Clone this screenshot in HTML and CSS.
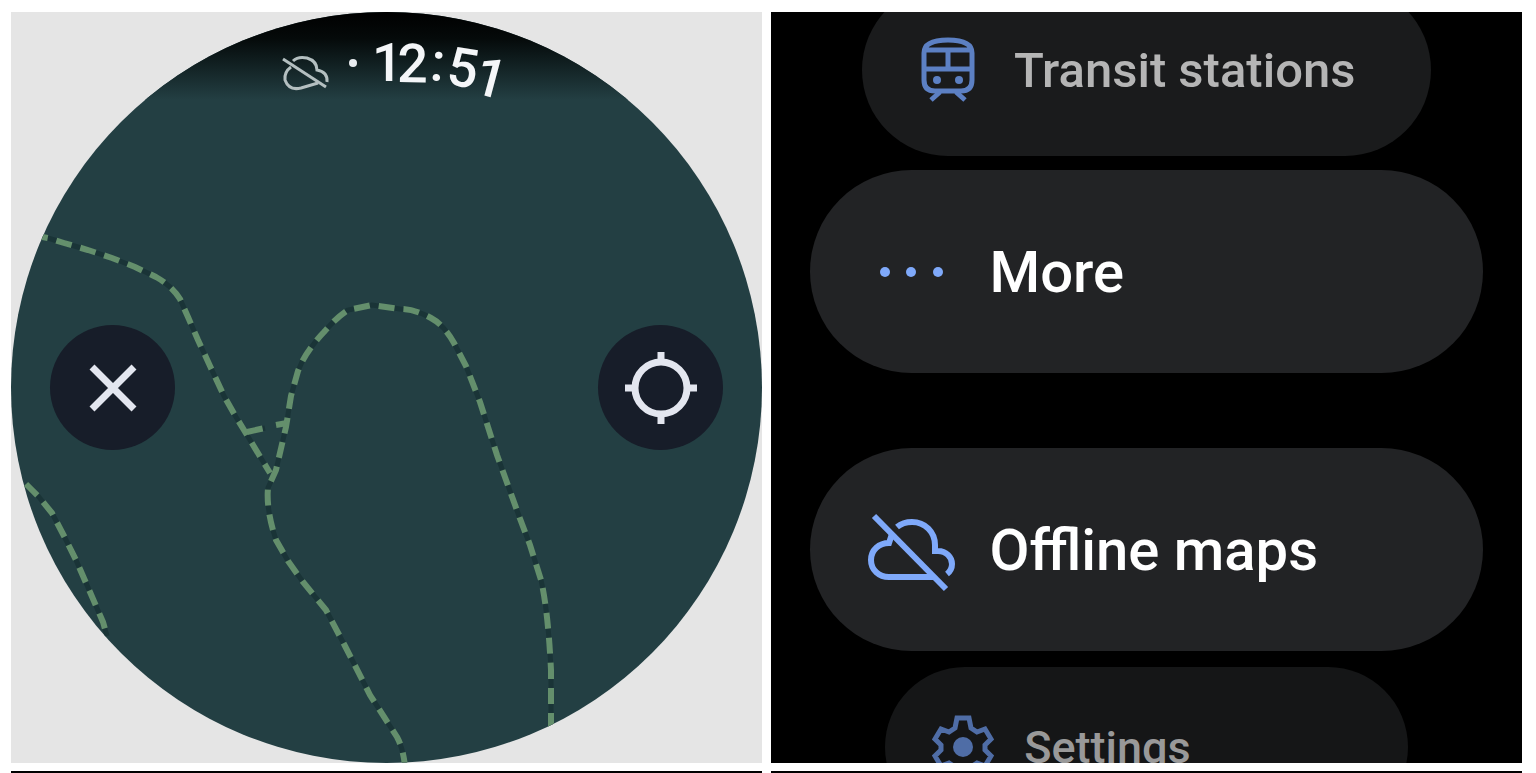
FILE: index.html
```html
<!DOCTYPE html>
<html lang="en">
<head>
    <meta charset="UTF-8">
    <meta name="viewport" content="width=device-width, initial-scale=1.0">
    <title>Offline maps</title>
    <link rel="stylesheet" href="styles.css">
</head>
<body>
    <main class="screens">
        <!-- watch face with the map -->
        <section class="tile tile-map">
            <svg class="map" viewBox="11 12 751 751" role="img" aria-label="Trail map">
                <defs>
                    <clipPath id="face"><circle cx="386.5" cy="387.5" r="375.5"/></clipPath>
                    <linearGradient id="fade" x1="0" y1="0" x2="0" y2="1">
                        <stop offset="0" stop-color="#000"/>
                        <stop offset="0.3" stop-color="#050a0a"/>
                        <stop offset="1" stop-color="#233f43"/>
                    </linearGradient>
                    <g id="trails">
                        <path d="M32 235 L48 238 L64 243 L88 250 L112 258 L135 267 L156 277 Q172 286 180 299 L188 317 L198 340 L210 366 L224 396 L236 417 L247 435 L270 473"/>
                        <path d="M551 729 L551 670 Q548 610 541 580 L530 545 L519 516 L497 455 L480 402 L466 366 L454 343 Q444 325 431 318 Q415 309 400 309 L372 305 L348 310 Q338 316 324 332 Q305 352 298 371 L291 396 L286 427 L276 470 L268 488 Q266 510 276 540 L288 561 L303 582 L326 610 L345 646 L370 695 L397 737 Q403 748 405 766"/>
                        <path d="M247 432 L265 428 M276 425 L287 423"/>
                        <path d="M26 484 L38 496 L52 513 L64 536 L76 560 L90 592 L103 622 L107 636"/>
                    </g>
                </defs>
                <g clip-path="url(#face)">
                    <rect class="land" x="11" y="12" width="751" height="751"/>
                    <rect fill="url(#fade)" x="11" y="12" width="751" height="88"/>
                    <use href="#trails" class="trail-base"/>
                    <use href="#trails" class="trail"/>
                </g>
                <g class="status-icon">
                    <path d="M283 59 L326 87"/>
                    <path d="M293 61 Q298 56 307 58 Q317 61 317 70 Q328 72 327 82"/>
                    <path d="M291 67 Q284 72 285 80 Q289 91 301 88 L318 83"/>
                </g>
                <circle class="status-dot" cx="353" cy="63" r="4"/>
                <!-- digits follow the rim -->
                <text class="clock" x="372 397 429 445 471" y="81 82 80 84 92" rotate="0 1 6 9 15">12:51</text>
            </svg>
            <div class="map-controls">
                <button class="round-button" type="button" aria-label="Close">
                    <svg viewBox="0 0 72 72"><path d="M15 15 L57 57 M57 15 L15 57"/></svg>
                </button>
                <button class="round-button" type="button" aria-label="My location">
                    <svg viewBox="0 0 72 72"><circle cx="36" cy="36" r="26"/><path d="M36 0 V10 M36 62 V72 M0 36 H10 M62 36 H72"/></svg>
                </button>
            </div>
        </section>

        <!-- scrolled menu -->
        <nav class="tile menu">
            <button class="item item-transit" type="button">
                <svg class="icon" viewBox="0 0 76 66">
                    <path d="M14 16 Q14 3 38 3 Q62 3 62 16 V43 Q62 54 51 54 H25 Q14 54 14 43 Z M14 13 H62 M14 32 H62 M38 13 V32"/>
                    <path d="M30 55 L21 63 M46 55 L55 63"/>
                    <circle class="fill" cx="27" cy="43" r="4"/><circle class="fill" cx="49" cy="43" r="4"/>
                </svg>
                <span>Transit stations</span>
            </button>
            <button class="item" type="button">
                <svg class="icon" viewBox="0 0 88 78">
                    <circle class="fill" cx="17" cy="39" r="5"/><circle class="fill" cx="43" cy="39" r="5"/><circle class="fill" cx="70" cy="39" r="5"/>
                </svg>
                <span>More</span>
            </button>
            <button class="item item-offline" type="button">
                <svg class="icon" viewBox="0 -3 88 78">
                    <path d="M6 2 L78 75"/>
                    <path d="M29 13 Q35 8 44 8 C57 8 67 18 67 31 V37 H70 C78 37 84 43 84 50 Q84 56 79 60"/>
                    <path d="M24 20 L21 29 C11 29 3 36 3 46 C3 56 11 63 21 63 H66"/>
                </svg>
                <span>Offline maps</span>
            </button>
            <button class="item item-settings" type="button">
                <svg class="icon" viewBox="0 0 68 68">
                    <path d="M28 5 H40 L42 15 L48 19 L56 16 L62 26 L56 32 V37 L62 43 L56 53 L48 50 L42 54 L40 64 H28 L26 54 L20 50 L12 53 L6 43 L12 37 V32 L6 26 L12 16 L20 19 L26 15 Z"/>
                    <circle class="fill" cx="34" cy="34" r="10"/>
                </svg>
                <span>Settings</span>
            </button>
        </nav>

        <!-- next row, cut off by the window -->
        <section class="tile"></section>
        <section class="tile"></section>
    </main>
</body>
</html>
```
FILE: styles.css
```css
body {
    margin: 0;
    height: 100vh;
    overflow: hidden;
    background-color: #fff;
    font-family: Roboto, "Liberation Sans", sans-serif;
}

.screens {
    display: grid;
    grid-template-columns: 1fr 1fr;
    gap: 8px 9px;
    padding: 12px 14px 0 11px;
}

.tile {
    aspect-ratio: 1;
    min-height: 0;
    overflow: hidden;
    background-color: #000;
}

/* map */
.tile-map {
    position: relative;
    background-color: #e5e5e5;
}

.map {
    display: block;
    width: 100%;
}

.land {
    fill: #233f43;
}

.trail-base,
.trail {
    fill: none;
    stroke: #1a3437;
    stroke-width: 5;
}

.trail {
    stroke: #648f6c;
    stroke-width: 6;
    stroke-dasharray: 16 9;
}

.status-icon {
    fill: none;
    stroke: #b4bfc0;
    stroke-width: 3;
}

.status-dot {
    fill: #e8ecef;
}

.clock {
    fill: #f4f6f8;
    font-size: 54px;
    font-weight: 500;
}

.map-controls {
    position: absolute;
    inset: 0;
    display: flex;
    align-items: center;
    justify-content: space-between;
    padding: 0 39px;
}

.round-button {
    display: flex;
    align-items: center;
    justify-content: center;
    width: 125px;
    height: 125px;
    padding: 0;
    border: none;
    border-radius: 50%;
    background-color: #171d29;
    cursor: pointer;
}

.round-button svg {
    width: 72px;
    fill: none;
    stroke: #e3e6ef;
    stroke-width: 7;
}

/* menu */
.menu {
    display: flex;
    flex-direction: column;
    align-items: center;
}

.item {
    display: flex;
    flex-shrink: 0;
    align-items: center;
    gap: 33px;
    box-sizing: border-box;
    width: 89.5%;
    height: 203px;
    padding: 0 58px;
    border: none;
    border-radius: 102px;
    background-color: #222325;
    color: #fff;
    font-family: inherit;
    font-size: 58px;
    font-weight: 500;
    text-align: left;
    white-space: nowrap;
    cursor: pointer;
}

.icon {
    flex-shrink: 0;
    width: 88px;
    overflow: visible;
    fill: none;
    stroke: #7fa9fa;
    stroke-width: 6;
}

.fill {
    fill: #7fa9fa;
    stroke: none;
}

.item-offline {
    margin-top: 75px;
}

.item-transit {
    gap: 28px;
    width: 75.8%;
    height: 172px;
    margin: -28px 0 14px;
    padding: 0 48px;
    border-radius: 86px;
    background-color: #1a1b1c;
    color: #b5b5b5;
    font-size: 49px;
}

.item-transit .icon {
    width: 76px;
    stroke: #5c80c3;
    stroke-width: 5;
}

.item-transit .fill {
    fill: #5c80c3;
}

.item-settings {
    gap: 27px;
    width: 69.6%;
    height: 160px;
    margin-top: 16px;
    padding: 0 44px;
    border-radius: 80px;
    background-color: #151617;
    color: #999;
    font-size: 45px;
}

.item-settings .icon {
    width: 68px;
    stroke: #4f6da6;
    stroke-width: 5;
}

.item-settings .fill {
    fill: #4f6da6;
}
```
